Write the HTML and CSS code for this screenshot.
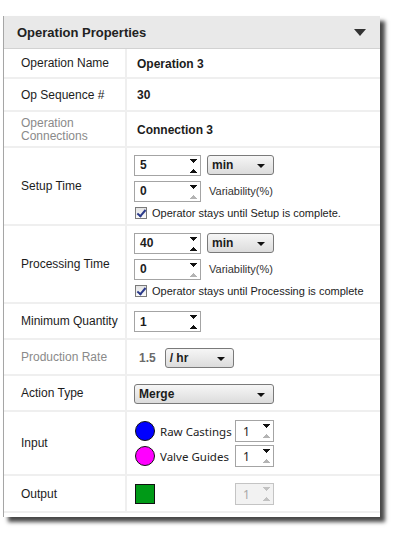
FILE: index.html
```html
<!DOCTYPE html>
<html lang="en">
<head>
    <meta charset="UTF-8">
    <title>Operation Properties</title>
    <link rel="stylesheet" href="styles.css">
</head>
<body>
    <div class="panel">
        <div class="panel-head">
            <span>Operation Properties</span>
            <span class="caret"></span>
        </div>

        <div class="row r30">
            <div class="label">Operation Name</div>
            <div class="value"><span class="text">Operation 3</span></div>
        </div>
        <div class="row r33">
            <div class="label">Op Sequence #</div>
            <div class="value"><span class="text">30</span></div>
        </div>
        <div class="row r36">
            <div class="label muted">Operation<br>Connections</div>
            <div class="value"><span class="text">Connection 3</span></div>
        </div>

        <div class="row r78">
            <div class="label">Setup Time</div>
            <div class="value stack">
                <div class="line">
                    <div class="spin"><span>5</span><i class="arrows"></i></div>
                    <div class="select unit">min<i class="down"></i></div>
                </div>
                <div class="line">
                    <div class="spin"><span>0</span><i class="arrows at-min"></i></div>
                    <span class="hint">Variability(%)</span>
                </div>
                <div class="check"><i class="box"></i>Operator stays until Setup is complete.</div>
            </div>
        </div>

        <div class="row r78">
            <div class="label">Processing Time</div>
            <div class="value stack">
                <div class="line">
                    <div class="spin"><span>40</span><i class="arrows"></i></div>
                    <div class="select unit">min<i class="down"></i></div>
                </div>
                <div class="line">
                    <div class="spin"><span>0</span><i class="arrows at-min"></i></div>
                    <span class="hint">Variability(%)</span>
                </div>
                <div class="check"><i class="box"></i>Operator stays until Processing is complete</div>
            </div>
        </div>

        <div class="row r36">
            <div class="label">Minimum Quantity</div>
            <div class="value">
                <div class="spin"><span>1</span><i class="arrows"></i></div>
            </div>
        </div>
        <div class="row r36">
            <div class="label muted">Production Rate</div>
            <div class="value">
                <span class="rate">1.5</span>
                <div class="select per">/ hr<i class="down"></i></div>
            </div>
        </div>
        <div class="row r36">
            <div class="label">Action Type</div>
            <div class="value">
                <div class="select action">Merge<i class="down"></i></div>
            </div>
        </div>

        <div class="row r64">
            <div class="label">Input</div>
            <div class="value stack tight">
                <div class="part">
                    <i class="dot blue"></i><span class="name">Raw Castings</span>
                    <div class="qty"><span>1</span><i class="arrows at-min"></i></div>
                </div>
                <div class="part">
                    <i class="dot pink"></i><span class="name">Valve Guides</span>
                    <div class="qty"><span>1</span><i class="arrows at-min"></i></div>
                </div>
            </div>
        </div>
        <div class="row r37">
            <div class="label">Output</div>
            <div class="value">
                <div class="part">
                    <i class="square"></i><span class="name"></span>
                    <div class="qty off"><span>1</span><i class="arrows all-off"></i></div>
                </div>
            </div>
        </div>
    </div>
</body>
</html>
```

FILE: styles.css
```css
html, body {
    height: 533px;
    overflow: hidden;
}
body {
    margin: 0;
    background: #ffffff;
    color: #1c1c1c;
    font-family: "Liberation Sans", Arial, sans-serif;
    font-size: 12px;
}
.panel {
    width: 376px;
    margin: 16px 0 0 3px;
    padding-bottom: 4px;
    border-left: 1px solid #a6a6a6;
    background: #ffffff;
    box-shadow: 5px 5px 4px rgba(0, 0, 0, 0.72);
}
.panel-head {
    display: flex;
    align-items: center;
    justify-content: space-between;
    height: 33px;
    box-sizing: border-box;
    padding: 0 14px 0 13px;
    background: #e9e9e9;
    border-bottom: 1px solid #d2d2d2;
    font-size: 13px;
    font-weight: bold;
    color: #222;
}
.caret {
    width: 0;
    height: 0;
    border-left: 6px solid transparent;
    border-right: 6px solid transparent;
    border-top: 7px solid #333;
}
.row {
    display: grid;
    grid-template-columns: 123px 1fr;
    box-sizing: border-box;
    border-bottom: 2px solid #efefef;
}
.r30 { height: 30px; }
.r33 { height: 33px; }
.r36 { height: 36px; }
.r37 { height: 37px; }
.r64 { height: 64px; }
.r78 { height: 78px; }
.label {
    display: flex;
    align-items: center;
    padding: 1px 0 0 17px;
    border-right: 2px solid #efefef;
    line-height: 13px;
}
.muted { color: #8a8a8a; }
.value {
    display: flex;
    align-items: center;
    padding: 1px 0 0 7px;
}
.text {
    margin-left: 3px;
    font-weight: bold;
}
.stack {
    flex-direction: column;
    align-items: flex-start;
    justify-content: center;
    gap: 5px;
}
.stack.tight { gap: 3px; }
.line {
    display: flex;
    align-items: center;
    gap: 6px;
}
.spin, .qty {
    position: relative;
    display: flex;
    align-items: center;
    box-sizing: border-box;
    width: 67px;
    height: 21px;
    padding-left: 5px;
    border: 1px solid #a4a4a4;
    background: #fff;
    font-weight: bold;
}
.arrows {
    position: absolute;
    right: 3px;
    top: 3px;
    width: 7px;
    height: 14px;
    background:
        linear-gradient(to top right, transparent 50%, #111 50%) left top / 4px 5px no-repeat,
        linear-gradient(to top left, transparent 50%, #111 50%) right top / 4px 5px no-repeat,
        linear-gradient(to bottom right, transparent 50%, #111 50%) left bottom / 4px 5px no-repeat,
        linear-gradient(to bottom left, transparent 50%, #111 50%) right bottom / 4px 5px no-repeat;
}
.arrows.at-min {
    background:
        linear-gradient(to top right, transparent 50%, #111 50%) left top / 4px 5px no-repeat,
        linear-gradient(to top left, transparent 50%, #111 50%) right top / 4px 5px no-repeat,
        linear-gradient(to bottom right, transparent 50%, #b4b4b4 50%) left bottom / 4px 5px no-repeat,
        linear-gradient(to bottom left, transparent 50%, #b4b4b4 50%) right bottom / 4px 5px no-repeat;
}
.arrows.all-off {
    background:
        linear-gradient(to top right, transparent 50%, #c2c2c2 50%) left top / 4px 5px no-repeat,
        linear-gradient(to top left, transparent 50%, #c2c2c2 50%) right top / 4px 5px no-repeat,
        linear-gradient(to bottom right, transparent 50%, #c2c2c2 50%) left bottom / 4px 5px no-repeat,
        linear-gradient(to bottom left, transparent 50%, #c2c2c2 50%) right bottom / 4px 5px no-repeat;
}
.select {
    position: relative;
    display: flex;
    align-items: center;
    box-sizing: border-box;
    height: 20px;
    padding-left: 4px;
    border: 1px solid #7a7a7a;
    border-radius: 3px;
    background: linear-gradient(#f6f6f6, #dcdcdc);
    font-weight: bold;
}
.select .down {
    position: absolute;
    right: 8px;
    top: 8px;
    width: 0;
    height: 0;
    border-left: 4px solid transparent;
    border-right: 4px solid transparent;
    border-top: 4px solid #111;
}
.unit { width: 67px; }
.per { width: 69px; margin-left: 9px; }
.action { width: 140px; }
.rate {
    margin-left: 5px;
    font-weight: bold;
    color: #6a6a6a;
}
.hint {
    margin-left: 2px;
    font-size: 11px;
    color: #333;
}
.check {
    display: flex;
    align-items: center;
    gap: 5px;
    margin-left: 1px;
    font-size: 11px;
}
.check .box {
    position: relative;
    display: block;
    width: 12px;
    height: 12px;
    box-sizing: border-box;
    border: 1px solid #7a7a7a;
    background: linear-gradient(#e4e4e4, #fafafa);
}
.check .box::after {
    content: "";
    position: absolute;
    left: 3px;
    top: 0;
    width: 3px;
    height: 7px;
    border-right: 2px solid #2b3a8a;
    border-bottom: 2px solid #2b3a8a;
    transform: rotate(40deg);
}
.part {
    display: flex;
    align-items: center;
}
.dot, .square {
    display: block;
    box-sizing: border-box;
    width: 20px;
    height: 20px;
    margin-left: 1px;
    border: 1px solid #111;
}
.dot { border-radius: 50%; }
.blue { background: #0000ff; }
.pink { background: #ff00ff; }
.square { background: #009a17; }
.name {
    width: 75px;
    margin-left: 5px;
    font-family: "Noto Sans", sans-serif;
    font-size: 11.5px;
    color: #222;
}
.qty {
    width: 39px;
    height: 22px;
    padding-left: 7px;
    font-family: "Noto Sans", sans-serif;
    font-size: 12px;
    font-weight: normal;
    color: #222;
}
.qty.off {
    background: #f2f2f2;
    border-color: #c4c4c4;
    color: #a8a8a8;
}
```
